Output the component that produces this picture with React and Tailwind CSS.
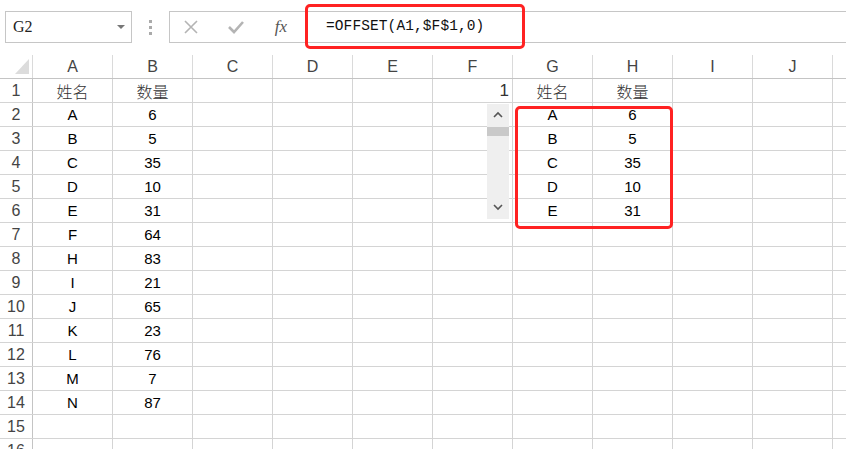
import React from 'react';

const cols = ['A', 'B', 'C', 'D', 'E', 'F', 'G', 'H', 'I', 'J'];

const data = {
  1: { A: '姓名', B: '数量', F: '1', G: '姓名', H: '数量' },
  2: { A: 'A', B: '6', G: 'A', H: '6' },
  3: { A: 'B', B: '5', G: 'B', H: '5' },
  4: { A: 'C', B: '35', G: 'C', H: '35' },
  5: { A: 'D', B: '10', G: 'D', H: '10' },
  6: { A: 'E', B: '31', G: 'E', H: '31' },
  7: { A: 'F', B: '64' },
  8: { A: 'H', B: '83' },
  9: { A: 'I', B: '21' },
  10: { A: 'J', B: '65' },
  11: { A: 'K', B: '23' },
  12: { A: 'L', B: '76' },
  13: { A: 'M', B: '7' },
  14: { A: 'N', B: '87' },
};

const rows = Array.from({ length: 16 }, (_, i) => i + 1);

function Cell({ value, col, row }) {
  const isHead = row === 1 && value && value !== '1';
  const isNum = col === 'F';
  return (
    <div
      className={
        'w-[80px] shrink-0 h-full border-r border-[#d4d4d4] flex items-center ' +
        (isNum ? 'justify-end pr-[3px]' : 'justify-center')
      }
    >
      {value && (
        <span
          className={
            isHead
              ? "font-['Noto_Sans_CJK_SC',sans-serif] font-light text-[16px] text-[#333] leading-none"
              : isNum
              ? "font-['Liberation_Sans',sans-serif] text-[17px] text-[#333] leading-none"
              : "font-['Liberation_Sans',sans-serif] text-[15px] text-black leading-none"
          }
        >
          {value}
        </span>
      )}
    </div>
  );
}

export default function App() {
  return (
    <div className="w-[846px] h-[449px] overflow-hidden bg-white relative">
      {/* formula bar */}
      <div className="relative h-[55px] flex items-start pt-[11px] pl-[5px]">
        <div className="w-[127px] h-[32px] border border-[#c6c6c6] flex items-center justify-between pl-[7px] pr-[6px]">
          <span className="font-['Liberation_Serif',serif] text-[16px] text-[#222]">G2</span>
          <span className="w-0 h-0 border-l-[4px] border-r-[4px] border-t-[4px] border-l-transparent border-r-transparent border-t-[#777]" />
        </div>
        <div className="w-[37px] h-[32px] flex flex-col items-center justify-center gap-[3px]">
          <span className="w-[3px] h-[3px] bg-[#aaa]" />
          <span className="w-[3px] h-[3px] bg-[#aaa]" />
          <span className="w-[3px] h-[3px] bg-[#aaa]" />
        </div>
        <div className="flex-1 h-[32px] border border-r-0 border-[#c6c6c6] flex items-center">
          <div className="w-[42px] flex justify-center">
            <svg width="16" height="16" viewBox="0 0 16 16">
              <path d="M2 2 L14 14 M14 2 L2 14" stroke="#b4b4b4" strokeWidth="1.6" fill="none" />
            </svg>
          </div>
          <div className="w-[48px] flex justify-center">
            <svg width="18" height="16" viewBox="0 0 18 16">
              <path d="M2 8 L7 13 L16 3" stroke="#b4b4b4" strokeWidth="2.6" fill="none" />
            </svg>
          </div>
          <div className="w-[42px] flex justify-center">
            <span className="font-['Liberation_Serif',serif] italic text-[17px] text-[#555]">fx</span>
          </div>
          <span className="ml-[24px] font-['Liberation_Mono',monospace] text-[14.5px] text-[#111] tracking-[0.1px]">
            =OFFSET(A1,$F$1,0)
          </span>
        </div>
        <div className="absolute left-[305px] top-[4px] w-[220px] h-[45px] border-[3px] border-[#ff2222] rounded-[5px]" />
      </div>

      {/* grid */}
      <div className="relative">
        <div className="flex h-[24px] border-b border-[#c4c4c4]">
          <div className="w-[33px] shrink-0 h-full border-r border-[#dadada] relative">
            <svg className="absolute left-0 top-0" width="33" height="24" viewBox="0 0 33 24">
              <polygon points="29,4 29,19 15,19" fill="#dcdcdc" />
            </svg>
          </div>
          {cols.map((c) => (
            <div
              key={c}
              className="w-[80px] shrink-0 h-full border-r border-[#dadada] flex items-center justify-center font-['Liberation_Sans',sans-serif] text-[16px] text-[#444]"
            >
              {c}
            </div>
          ))}
        </div>
        {rows.map((r) => (
          <div key={r} className="flex h-[24px] border-b border-[#d4d4d4]">
            <div className="w-[33px] shrink-0 h-full border-r border-[#c4c4c4] flex items-center justify-center font-['Liberation_Sans',sans-serif] text-[16px] text-[#444]">
              {r}
            </div>
            {cols.map((c) => (
              <Cell key={c} col={c} row={r} value={data[r] && data[r][c]} />
            ))}
          </div>
        ))}

        {/* spin scrollbar control */}
        <div className="absolute left-[487px] top-[49px] w-[22px] h-[115px] bg-[#efefef] flex flex-col items-center">
          <svg className="mt-[7px]" width="10" height="7" viewBox="0 0 10 7">
            <path d="M1 6 L5 2 L9 6" stroke="#555" strokeWidth="1.6" fill="none" />
          </svg>
          <div className="mt-[9px] w-full h-[9px] bg-[#c9c9c9]" />
          <div className="flex-1" />
          <svg className="mb-[8px]" width="10" height="7" viewBox="0 0 10 7">
            <path d="M1 1 L5 5 L9 1" stroke="#555" strokeWidth="1.6" fill="none" />
          </svg>
        </div>

        <div className="absolute left-[515px] top-[51px] w-[158px] h-[123px] border-[3px] border-[#ff2222] rounded-[5px]" />
      </div>
    </div>
  );
}
